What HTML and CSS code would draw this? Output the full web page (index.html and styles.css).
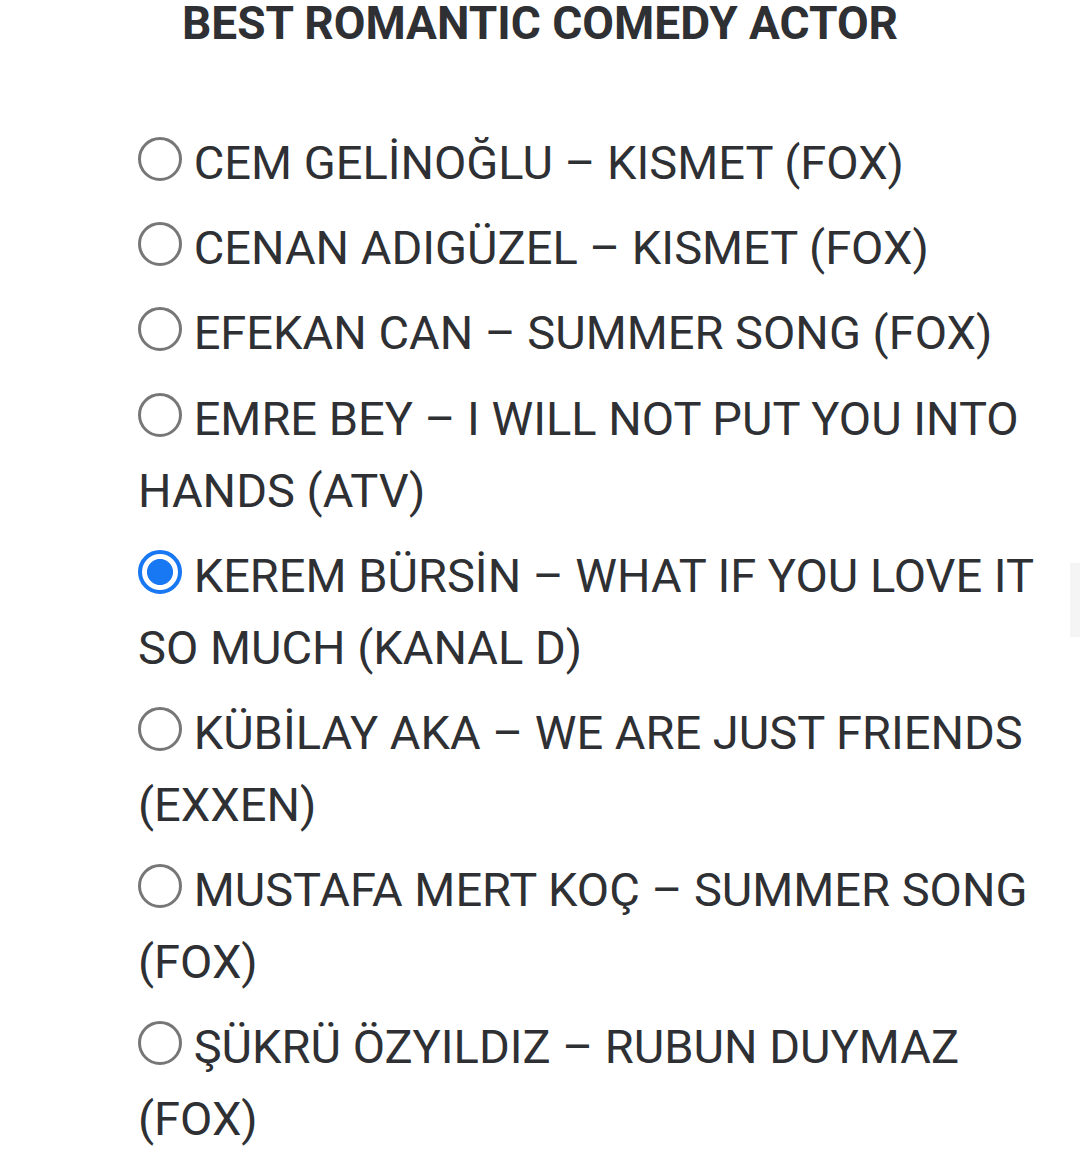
FILE: index.html
```html
<!DOCTYPE html>
<html lang="tr">
<head>
<meta charset="utf-8">
<title>Best Romantic Comedy Actor</title>
<link rel="stylesheet" href="styles.css">
</head>
<body>
<div class="page">
  <h2 class="title">BEST ROMANTIC COMEDY ACTOR</h2>
  <ul class="options">
    <li class="option"><label><input type="radio" name="actor" class="radio"> CEM GELİNOĞLU – KISMET (FOX)</label></li>
    <li class="option"><label><input type="radio" name="actor" class="radio"> CENAN ADIGÜZEL – KISMET (FOX)</label></li>
    <li class="option"><label><input type="radio" name="actor" class="radio"> EFEKAN CAN – SUMMER SONG (FOX)</label></li>
    <li class="option"><label><input type="radio" name="actor" class="radio"> EMRE BEY – I WILL NOT PUT YOU INTO HANDS (ATV)</label></li>
    <li class="option"><label><input type="radio" name="actor" class="radio" checked> KEREM BÜRSİN – WHAT IF YOU LOVE IT SO MUCH (KANAL D)</label></li>
    <li class="option"><label><input type="radio" name="actor" class="radio"> KÜBİLAY AKA – WE ARE JUST FRIENDS (EXXEN)</label></li>
    <li class="option"><label><input type="radio" name="actor" class="radio"> MUSTAFA MERT KOÇ – SUMMER SONG (FOX)</label></li>
    <li class="option"><label><input type="radio" name="actor" class="radio"> ŞÜKRÜ ÖZYILDIZ – RUBUN DUYMAZ (FOX)</label></li>
  </ul>
  <div class="edge-tab"></div>
</div>
</body>
</html>
```
FILE: styles.css
```css
html, body {
  margin: 0;
  padding: 0;
  background: #ffffff;
}
body {
  font-family: Roboto, "Noto Sans", "Liberation Sans", sans-serif;
  color: #2e3034;
}
.page {
  position: relative;
  width: 1080px;
  height: 1163px;
  overflow: hidden;
}
.title {
  margin: 0;
  font-size: 46px;
  line-height: 46px;
  font-weight: 700;
  text-align: center;
  color: #2e3034;
}
.options {
  list-style: none;
  margin: 81px 0 0 0;
  padding: 0 0 0 138px;
  width: 920px;
}
.option {
  font-size: 47px;
  line-height: 72px;
  margin-bottom: 13.2px;
}
.radio {
  appearance: none;
  -webkit-appearance: none;
  box-sizing: border-box;
  width: 44px;
  height: 44px;
  margin: 0;
  border: 3px solid #777777;
  border-radius: 50%;
  vertical-align: -2px;
  background: #fff;
}
.radio:checked {
  border: 4px solid #1877f2;
  background: radial-gradient(circle, #1877f2 0 12.6px, #fff 13.4px);
}
.edge-tab {
  position: absolute;
  left: 1070px;
  top: 563px;
  width: 10px;
  height: 74px;
  background: #f5f5f5;
}
```
